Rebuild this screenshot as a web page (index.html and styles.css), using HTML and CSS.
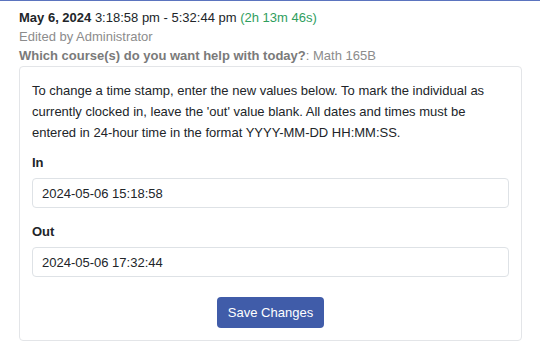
FILE: index.html
```html
<!DOCTYPE html>
<html lang="en">
  <head>
    <meta charset="utf-8" />
    <title>Edit Time Stamp</title>
    <link rel="stylesheet" href="styles.css">
  </head>
  <body>
    <div class="entry">
      <div class="entry-time">
        <strong>May 6, 2024</strong> 3:18:58 pm - 5:32:44 pm <span class="duration">(2h 13m 46s)</span>
      </div>
      <div class="entry-meta">Edited by Administrator</div>
      <div class="entry-meta"><strong>Which course(s) do you want help with today?</strong>: Math 165B</div>

      <form class="edit-card">
        <p class="help">To change a time stamp, enter the new values below. To mark the individual as currently clocked in, leave the 'out' value blank. All dates and times must be entered in 24-hour time in the format YYYY-MM-DD HH:MM:SS.</p>
        <div class="form-group">
          <label for="in">In</label>
          <input type="text" id="in" value="2024-05-06 15:18:58">
        </div>
        <div class="form-group">
          <label for="out">Out</label>
          <input type="text" id="out" value="2024-05-06 17:32:44">
        </div>
        <div class="actions">
          <button type="submit">Save Changes</button>
        </div>
      </form>
    </div>
  </body>
</html>
```

FILE: styles.css
```css
body {
  margin: 0;
  font-family: "Liberation Sans", Arial, sans-serif;
  font-size: 13px;
  color: #212529;
  background: white;
  border-top: 1px solid #5b74bf;
}

.entry {
  padding: 7px 18px 0 19px;
}

.entry-time,
.entry-meta {
  line-height: 19px;
}

.duration {
  color: #2f9e5e;
}

.entry-meta {
  color: #8c8c8c;
}

.entry-meta strong {
  color: #7a7a7a;
}

.edit-card {
  margin-top: 1px;
  padding: 13px 12px 12px;
  border: 1px solid #e3e5e8;
  border-radius: 4px;
}

.help {
  margin: 0 0 9px;
  line-height: 21px;
}

.form-group {
  margin-bottom: 13px;
}

label {
  display: block;
  font-weight: bold;
  line-height: 21px;
  margin-bottom: 5px;
}

input {
  display: block;
  width: 100%;
  box-sizing: border-box;
  height: 30px;
  padding: 0 9px;
  border: 1px solid #dee2e6;
  border-radius: 4px;
  font-family: inherit;
  font-size: 13px;
  color: #212529;
}

.actions {
  text-align: center;
  padding-top: 7px;
}

button {
  height: 31px;
  padding: 0 11px;
  background-color: #405ca9;
  color: white;
  border: none;
  border-radius: 4px;
  font-family: inherit;
  font-size: 13px;
  vertical-align: top;
}
```
